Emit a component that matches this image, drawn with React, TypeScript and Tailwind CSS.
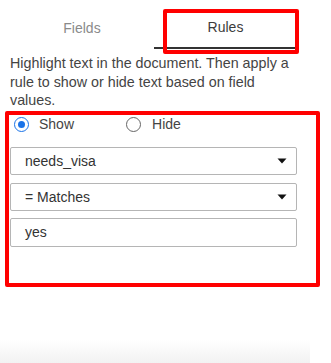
import React from "react";

function Caret() {
  return (
    <svg width="10" height="6" viewBox="0 0 10 6" className="shrink-0">
      <path d="M0.5 0.5 L9.5 0.5 L5 5.5 Z" fill="#111" />
    </svg>
  );
}

export default function App() {
  return (
    <div className="relative w-[331px] h-[363px] bg-white overflow-hidden font-['Liberation_Sans',Arial,sans-serif]">
      <div className="pl-[10px] w-[297px]">
        <div className="flex h-[49px]">
          <div className="w-[144px] flex items-center justify-center pt-[7px] text-[14px] text-[#8a8a8a]">
            Fields
          </div>
          <div className="w-[143px] flex items-center justify-center pt-[7px] text-[14px] text-[#3c3c3c] border-b-2 border-[#333]">
            Rules
          </div>
        </div>
        <p className="mt-[5px] text-[14.3px] leading-[18.5px] text-[#444]">
          Highlight text in the document. Then apply a rule to show or hide text based on field values.
        </p>
        <div className="mt-[4.5px] h-[20px] flex items-center text-[14px] text-[#444]">
          <div className="ml-[4px] w-[15px] h-[15px] rounded-full border-[1.5px] border-[#1a73e8] flex items-center justify-center">
            <div className="w-[7px] h-[7px] rounded-full bg-[#1a73e8]" />
          </div>
          <span className="ml-[10px]">Show</span>
          <div className="ml-[52px] w-[15px] h-[15px] rounded-full border-[1.5px] border-[#666]" />
          <span className="ml-[11px]">Hide</span>
        </div>
        <div className="mt-[13px] h-[28px] rounded-[2px] border border-[#b5b5b5] flex items-center justify-between pl-[14px] pr-[9px] text-[14px] text-[#333]">
          <span>needs_visa</span>
          <Caret />
        </div>
        <div className="mt-[8px] h-[28px] rounded-[2px] border border-[#b5b5b5] flex items-center justify-between pl-[14px] pr-[9px] text-[14px] text-[#333]">
          <span>= Matches</span>
          <Caret />
        </div>
        <div className="mt-[7px] h-[29px] rounded-[2px] border border-[#b5b5b5] flex items-center pl-[14px] text-[14px] text-[#333]">
          <span>yes</span>
        </div>
      </div>
      <div className="mt-[93px] w-[310px] h-[23px] bg-gradient-to-b from-white to-[#f2f2f2]" />
      <div className="absolute left-[163px] top-[9px] w-[136px] h-[45px] border-[4px] border-[#ff0000] rounded-[2px]" />
      <div className="absolute left-[5px] top-[111px] w-[315px] h-[176px] border-[4px] border-[#ff0000] rounded-[2px]" />
    </div>
  );
}
